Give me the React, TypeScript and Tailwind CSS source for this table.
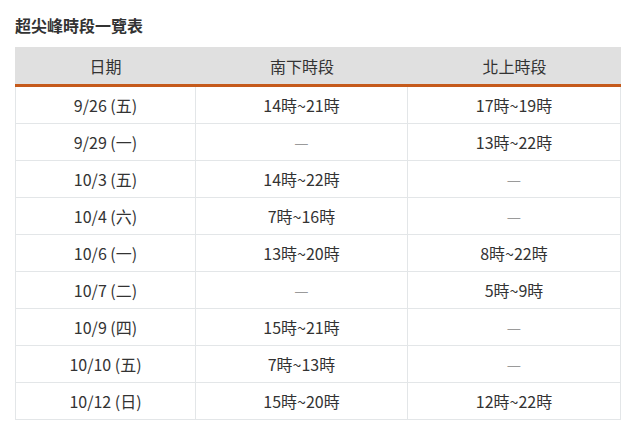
import React from "react";

const rows: [string, string, string][] = [
  ["9/26 (五)", "14時~21時", "17時~19時"],
  ["9/29 (一)", "—", "13時~22時"],
  ["10/3 (五)", "14時~22時", "—"],
  ["10/4 (六)", "7時~16時", "—"],
  ["10/6 (一)", "13時~20時", "8時~22時"],
  ["10/7 (二)", "—", "5時~9時"],
  ["10/9 (四)", "15時~21時", "—"],
  ["10/10 (五)", "7時~13時", "—"],
  ["10/12 (日)", "15時~20時", "12時~22時"],
];

function Cell({ v, last }: { v: string; last?: boolean }) {
  const dash = v === "—";
  return (
    <div
      className={
        "flex h-[36px] items-center justify-center " +
        (last ? "" : "border-r border-[#e3e6e8] ") +
        (dash ? "text-[#9a9a9a]" : "text-[#333333]")
      }
    >
      {v}
    </div>
  );
}

export default function App() {
  return (
    <div
      className="w-[640px] h-[441px] bg-white px-[15px] pt-[13px]"
      style={{ fontFamily: '"Noto Sans CJK TC", "Noto Sans", sans-serif' }}
    >
      <div className="text-[16px] leading-[24px] font-bold text-[#333333]">超尖峰時段一覽表</div>
      <div className="mt-[10px] w-[606px] text-[16px] text-[#333333]">
        <div className="grid grid-cols-[181px_212px_213px] h-[40px] bg-[#e0e0e0] border-b-[3px] border-[#c55a1b]">
          <div className="flex items-center justify-center">日期</div>
          <div className="flex items-center justify-center">南下時段</div>
          <div className="flex items-center justify-center">北上時段</div>
        </div>
        <div className="border-x border-[#e3e6e8]">
          {rows.map((r, i) => (
            <div
              key={i}
              className="grid grid-cols-[180px_212px_212px] border-b border-[#e3e6e8]"
            >
              <Cell v={r[0]} />
              <Cell v={r[1]} />
              <Cell v={r[2]} last />
            </div>
          ))}
        </div>
      </div>
    </div>
  );
}
